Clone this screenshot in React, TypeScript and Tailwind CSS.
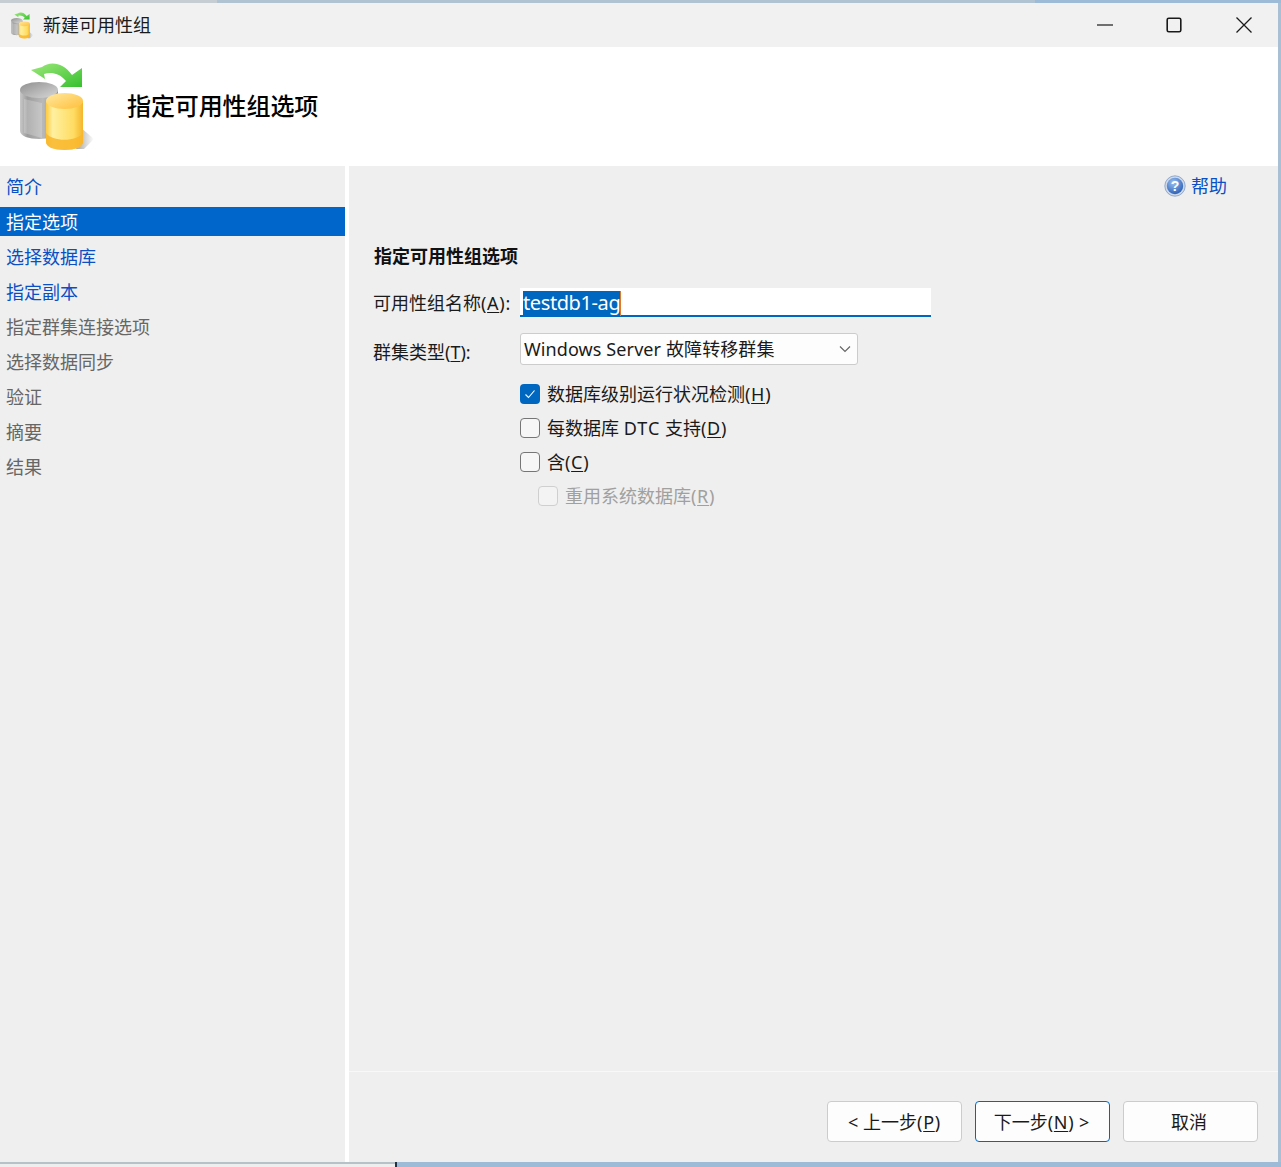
const FONT = "font-['Noto_Sans','Noto_Sans_CJK_SC',sans-serif]";

function DbIcon({ className }: { className: string }) {
  return (
    <svg viewBox="0 0 90 100" className={className}>
      <defs>
        <linearGradient id="gray-body" x1="0" x2="1" y1="0" y2="0">
          <stop offset="0" stopColor="#c9c9c9" />
          <stop offset="0.2" stopColor="#9c9c9c" />
          <stop offset="0.6" stopColor="#b9b9b9" />
          <stop offset="1" stopColor="#8e8e8e" />
        </linearGradient>
        <linearGradient id="gray-top" x1="0" x2="1" y1="0" y2="1">
          <stop offset="0" stopColor="#8f8f8f" />
          <stop offset="1" stopColor="#d8d8d8" />
        </linearGradient>
        <linearGradient id="yellow-body" x1="0" x2="1" y1="0" y2="0">
          <stop offset="0" stopColor="#ffc93f" />
          <stop offset="0.18" stopColor="#fff0a0" />
          <stop offset="0.75" stopColor="#ffdc62" />
          <stop offset="1" stopColor="#f5b52c" />
        </linearGradient>
        <linearGradient id="yellow-top" x1="0" x2="1" y1="0" y2="1">
          <stop offset="0" stopColor="#ffe9a0" />
          <stop offset="1" stopColor="#ffbf3a" />
        </linearGradient>
        <linearGradient id="green-arrow" x1="0" x2="1" y1="0" y2="1">
          <stop offset="0" stopColor="#9ce87a" />
          <stop offset="1" stopColor="#38c030" />
        </linearGradient>
        <linearGradient id="shadow-fade" x1="0" x2="1" y1="0" y2="0">
          <stop offset="0" stopColor="#808080" stopOpacity="0.7" />
          <stop offset="1" stopColor="#808080" stopOpacity="0" />
        </linearGradient>
      </defs>
      <path d="M70 72 L84 84 L74 94 L66 94 Z" fill="url(#shadow-fade)" />
      <path d="M10 35v41c0 5 9 8 19 8s19-3 19-8V35z" fill="url(#gray-body)" />
      <ellipse cx="29" cy="35" rx="19" ry="8" fill="url(#gray-top)" />
      <path d="M14 44l18 4v35l-18-5z" fill="#fff" opacity="0.22" />
      <path d="M36 46v41c0 5 8 8 18.500 8s18.500-3 18.500-8V46z" fill="url(#yellow-body)" />
      <ellipse cx="54.500" cy="46" rx="18.500" ry="8" fill="url(#yellow-top)" />
      <path d="M36 78c6 9 31 9 37 0v9c0 5-8 8-18.500 8s-18.500-3-18.500-8z" fill="#f9b62c" opacity="0.85" />
      <path
        d="M21 15L32 12C40 6 53 7 62 20L72 13V32H50L56 26C49 18 41 17 34 19L35 24Z"
        fill="url(#green-arrow)"
      />
    </svg>
  );
}

function HelpIcon() {
  return (
    <svg viewBox="0 0 22 22" className="w-[22px] h-[22px]">
      <defs>
        <radialGradient id="help-fill" cx="0.4" cy="0.3" r="0.8">
          <stop offset="0" stopColor="#9cc2f2" />
          <stop offset="1" stopColor="#1f56b0" />
        </radialGradient>
      </defs>
      <circle cx="11" cy="11" r="10.2" fill="#cfd9e8" stroke="#7d9cc6" strokeWidth="0.8" />
      <circle cx="11" cy="11" r="8.2" fill="url(#help-fill)" />
      <text
        x="11"
        y="16"
        textAnchor="middle"
        fontSize="14"
        fontWeight="700"
        fill="#fff"
        fontFamily="Liberation Sans, sans-serif"
      >
        ?
      </text>
    </svg>
  );
}

const steps = [
  { label: "简介", tone: "link" },
  { label: "指定选项", tone: "active" },
  { label: "选择数据库", tone: "link" },
  { label: "指定副本", tone: "link" },
  { label: "指定群集连接选项", tone: "muted" },
  { label: "选择数据同步", tone: "muted" },
  { label: "验证", tone: "muted" },
  { label: "摘要", tone: "muted" },
  { label: "结果", tone: "muted" },
];

function Mnemonic({ text, k }: { text: string; k: string }) {
  return (
    <>
      {text}
      <span className="tracking-[0.7px]">
        (<span className="underline underline-offset-2">{k}</span>)
      </span>
    </>
  );
}

function Check({
  checked,
  disabled,
  children,
}: {
  checked?: boolean;
  disabled?: boolean;
  children: React.ReactNode;
}) {
  return (
    <div className={`flex items-center h-[20px] gap-[7px] ${disabled ? "ml-[18px] text-[#a0a0a0]" : "text-[#1a1a1a]"}`}>
      <span
        className={`w-[20px] h-[20px] rounded-[4px] flex items-center justify-center ${
          checked
            ? "bg-[#0067c0]"
            : disabled
              ? "border border-[#cfcfcf] bg-[#f3f3f3]"
              : "border border-[#767676] bg-[#f6f6f6]"
        }`}
      >
        {checked && (
          <svg viewBox="0 0 12 12" className="w-[12px] h-[12px]" fill="none" stroke="#fff" strokeWidth="1.1">
            <path d="M1.5 6.5l3 3 6-7" />
          </svg>
        )}
      </span>
      <span className="leading-[20px]">{children}</span>
    </div>
  );
}

function Btn({ primary, children }: { primary?: boolean; children: React.ReactNode }) {
  return (
    <button
      className={`w-[135px] h-[41px] pt-[1px] rounded-[4px] bg-[#fdfdfd] border text-[18px] text-[#1a1a1a] ${
        primary ? "border-[#0067c0]" : "border-[#cccccc]"
      }`}
    >
      {children}
    </button>
  );
}

export default function App() {
  return (
    <div className={`${FONT} w-[1281px] h-[1167px] flex flex-col overflow-hidden bg-[#f0f0f0] text-[18px] text-[#1a1a1a]`}>
      <div className="h-[3px] shrink-0 flex">
        <div className="w-[217px] bg-[#c6ced4]" />
        <div className="w-[818px] bg-[#b0c3d2]" />
        <div className="flex-1 bg-[#9dbad6]" />
      </div>

      <div className="flex flex-1 min-h-0">
        <div className="flex flex-col flex-1 min-w-0">
          {/* title bar */}
          <div className="h-[44px] shrink-0 flex items-center bg-[#f1f1f1]">
            <DbIcon className="w-[27px] h-[30px] ml-[8px] blur-[0.3px]" />
            <span className="ml-[8px] text-[18px] leading-[24px]">新建可用性组</span>
            <div className="ml-auto flex items-center">
              <svg viewBox="0 0 16 16" className="w-[16px] h-[16px] mr-[53px]" stroke="#1a1a1a" strokeWidth="1.2">
                <path d="M0 8h16" />
              </svg>
              <svg viewBox="0 0 16 16" className="w-[16px] h-[16px] mr-[54px]" fill="none" stroke="#1a1a1a" strokeWidth="1.6">
                <rect x="1.2" y="1.2" width="13.600" height="13.600" rx="1.6" />
              </svg>
              <svg viewBox="0 0 16 16" className="w-[16px] h-[16px] mr-[26px]" stroke="#1a1a1a" strokeWidth="1.3">
                <path d="M0.5 0.5l15 15M15.5 0.5l-15 15" />
              </svg>
            </div>
          </div>

          {/* banner */}
          <div className="h-[119px] shrink-0 bg-white flex items-start">
            <DbIcon className="w-[90px] h-[100px] ml-[10px] mt-[8px] blur-[0.4px]" />
            <h1 className="ml-[27px] mt-[43px] text-[24px] font-medium leading-[32px] tracking-[-0.1px] text-black">指定可用性组选项</h1>
          </div>

          {/* body */}
          <div className="flex-1 min-h-0 flex">
            <nav className="w-[345px] shrink-0 bg-[#efefef] pt-[6px] flex flex-col gap-[6px]">
              {steps.map((s) => (
                <div
                  key={s.label}
                  className={`h-[29px] px-[6px] leading-[31px] ${
                    s.tone === "active"
                      ? "bg-[#0066cc] text-white"
                      : s.tone === "link"
                        ? "text-[#0a4fc4]"
                        : "text-[#666666]"
                  }`}
                >
                  {s.label}
                </div>
              ))}
            </nav>
            <div className="w-[4px] shrink-0 bg-white" />

            <main className="flex-1 min-w-0 flex flex-col bg-[#efefef]">
              <div className="flex-1 min-h-0 pl-[24px]">
                <div className="flex justify-end items-center h-[24px] mt-[8px] pr-[51px] gap-[5px] text-[#0a4fc4]">
                  <HelpIcon />
                  <span>帮助</span>
                </div>
                <h2 className="ml-[1px] mt-[46px] font-bold leading-[24px] text-[#111111]">指定可用性组选项</h2>

                <div className="mt-[20px] flex items-start">
                  <label className="w-[147px] leading-[30px]">
                    <Mnemonic text="可用性组名称" k="A" />:
                  </label>
                  <div className="w-[411px] h-[29px] bg-white border-b-2 border-[#0067c0] pl-[3px] pt-[2px]">
                    <span className="inline-block h-[25px] leading-[23px] text-[20px] tracking-[-0.4px] bg-[#0067c0] text-white border-r border-[#e0782a]">
                      testdb1-ag
                    </span>
                  </div>
                </div>

                <div className="mt-[15px] flex items-start">
                  <label className="w-[147px] leading-[38px]">
                    群集类型(<span className="underline underline-offset-2">T</span>):
                  </label>
                  <div className="w-[338px] h-[32px] bg-[#fdfdfd] border border-[#cccccc] rounded-[3px] flex items-center pl-[3px] pr-[6px]">
                    <span className="tracking-[0.1px]">Windows Server 故障转移群集</span>
                    <svg viewBox="0 0 12 8" className="ml-auto w-[12px] h-[8px]" fill="none" stroke="#666" strokeWidth="1.2">
                      <path d="M1 1.5l5 5 5-5" />
                    </svg>
                  </div>
                </div>

                <div className="mt-[13px] ml-[147px] flex flex-col gap-[14px]">
                  <Check checked>
                    <Mnemonic text="数据库级别运行状况检测" k="H" />
                  </Check>
                  <Check>
                    每数据库 <span className="tracking-[1px]">DTC</span> 支持
                    <Mnemonic text="" k="D" />
                  </Check>
                  <Check>
                    <Mnemonic text="含" k="C" />
                  </Check>
                  <Check disabled>
                    <Mnemonic text="重用系统数据库" k="R" />
                  </Check>
                </div>
              </div>

              <div className="h-[91px] shrink-0 border-t border-[#f8f8f8] flex justify-end gap-[13px] pt-[29px] pr-[20px]">
                <Btn>
                  &lt;&nbsp;上一步
                  <span className="tracking-[0.7px]">
                    (<span className="underline underline-offset-2">P</span>)
                  </span>
                </Btn>
                <Btn primary>
                  <span className="mr-[2px]">
                    下一步
                    <span className="tracking-[0.7px]">
                      (<span className="underline underline-offset-2">N</span>)
                    </span>
                    &nbsp;&gt;
                  </span>
                </Btn>
                <Btn>
                  <span className="mr-[3px]">取消</span>
                </Btn>
              </div>
            </main>
          </div>
        </div>
        <div className="w-[3px] shrink-0 bg-[#a9bfd3]" />
      </div>

      <div className="h-[5px] shrink-0 flex">
        <div className="w-[395px] border-t-2 border-[#b5c2c8] bg-[#eeeeee]" />
        <div className="w-[2px] bg-[#1f3347]" />
        <div className="flex-1 bg-[#9dbad6]" />
      </div>
    </div>
  );
}
